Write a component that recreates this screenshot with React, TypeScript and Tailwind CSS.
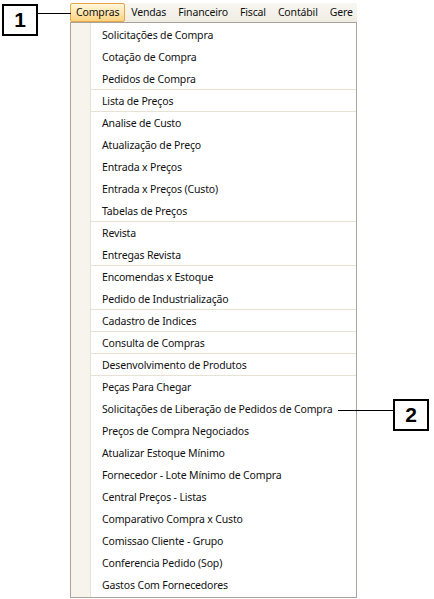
import React from "react";

const items: { label: string; sep?: boolean }[] = [
  { label: "Solicitações de Compra" },
  { label: "Cotação de Compra" },
  { label: "Pedidos de Compra", sep: true },
  { label: "Lista de Preços", sep: true },
  { label: "Analise de Custo" },
  { label: "Atualização de Preço" },
  { label: "Entrada x Preços" },
  { label: "Entrada x Preços (Custo)" },
  { label: "Tabelas de Preços", sep: true },
  { label: "Revista" },
  { label: "Entregas Revista", sep: true },
  { label: "Encomendas x Estoque" },
  { label: "Pedido de Industrialização", sep: true },
  { label: "Cadastro de Indices", sep: true },
  { label: "Consulta de Compras", sep: true },
  { label: "Desenvolvimento de Produtos", sep: true },
  { label: "Peças Para Chegar" },
  { label: "Solicitações de Liberação de Pedidos de Compra" },
  { label: "Preços de Compra Negociados" },
  { label: "Atualizar Estoque Mínimo" },
  { label: "Fornecedor - Lote Mínimo de Compra" },
  { label: "Central Preços - Listas" },
  { label: "Comparativo Compra x Custo" },
  { label: "Comissao Cliente - Grupo" },
  { label: "Conferencia Pedido (Sop)" },
  { label: "Gastos Com Fornecedores" },
];

const topMenu = ["Vendas", "Financeiro", "Fiscal", "Contábil", "Gere"];

function Callout({ n }: { n: string }) {
  return (
    <div className="w-[36px] h-[32px] border-2 border-black bg-white flex items-center justify-center text-[21px] font-bold font-['Liberation_Sans',sans-serif] text-black">
      {n}
    </div>
  );
}

export default function App() {
  return (
    <div className="relative w-[434px] h-[599px] bg-white overflow-hidden font-['Noto_Sans',sans-serif] text-[10.5px] tracking-[-0.15px] text-[#111]">
      {/* callout 1 */}
      <div className="absolute left-[2px] top-[4px]">
        <Callout n="1" />
      </div>
      <div className="absolute left-[38px] top-[13px] w-[33px] h-[1px] bg-black" />

      {/* callout 2 */}
      <div className="absolute left-[393px] top-[399px]">
        <Callout n="2" />
      </div>
      <div className="absolute left-[338px] top-[410px] w-[55px] h-[1px] bg-black" />

      <div className="ml-[70px] pt-[3px] w-[287px]">
        {/* menu bar */}
        <div className="h-[19px] flex items-stretch overflow-hidden whitespace-nowrap bg-gradient-to-b from-[#f8f7f2] to-[#efece2]">
          <div className="px-[5px] pt-[1px] flex items-center border border-[#e5a64a] rounded-[2px] bg-gradient-to-b from-[#fff8dc] to-[#fdd37e]">
            Compras
          </div>
          {topMenu.map((m) => (
            <div key={m} className="px-[6px] pt-[1px] flex items-center">
              {m}
            </div>
          ))}
        </div>

        {/* dropdown */}
        <div className="border border-[#a8a49b] bg-white flex">
          <div className="w-[20px] bg-[#f6f4ed] border-r border-[#e6e2d6]" />
          <div className="flex-1 pt-[1px] pb-[1px]">
            {items.map((it) => (
              <div
                key={it.label}
                className={
                  "h-[22px] flex items-center pl-[11px] pt-[2px] " +
                  (it.sep ? "border-b border-[#e7e2d4]" : "")
                }
              >
                {it.label}
              </div>
            ))}
          </div>
        </div>
      </div>
    </div>
  );
}
